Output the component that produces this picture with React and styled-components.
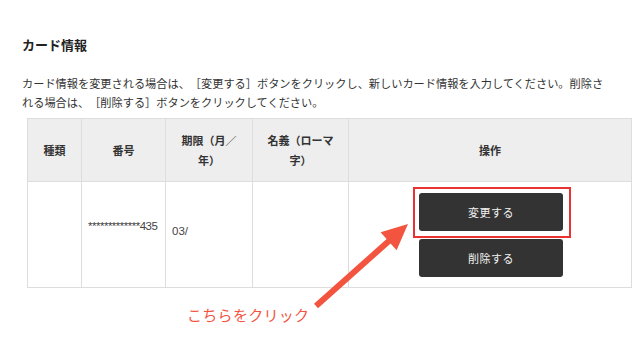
import styled, { createGlobalStyle } from 'styled-components';

const GlobalStyle = createGlobalStyle`
  html, body {
    margin: 0;
    padding: 0;
    background: #ffffff;
  }
  body {
    font-family: "Noto Sans CJK JP", "Noto Sans", sans-serif;
    color: #333333;
    text-spacing-trim: space-all;
  }
`

const Page = styled.div`
  position: relative;
  width: 640px;
  height: 360px;
  padding: 36px 0 0 22px;
  box-sizing: border-box;
  overflow: hidden;
`

const Title = styled.h2`
  margin: 0;
  font-size: 13px;
  line-height: 18px;
  font-weight: 700;
  color: #222222;
`

const Lead = styled.p`
  margin: 20px 0 6px;
  width: 590px;
  font-size: 11.2px;
  line-height: 19px;
  color: #333333;
`

const Table = styled.table`
  margin-left: 5px;
  width: 605px;
  border-collapse: collapse;
  table-layout: fixed;
  border: 1px solid #dddddd;
`

const Th = styled.th`
  box-sizing: border-box;
  width: ${({ w }) => (w ? `${w}px` : 'auto')};
  height: 63px;
  padding: 0 12px;
  background: #eeeeee;
  border: 1px solid #dddddd;
  font-size: 11px;
  line-height: 20px;
  font-weight: 700;
  color: #333333;
  text-align: center;
  vertical-align: middle;
`

const Td = styled.td`
  box-sizing: border-box;
  height: 106px;
  padding: 0 4px ${({ lift = 0 }) => lift}px 6px;
  border: 1px solid #dddddd;
  font-family: "Liberation Sans", "Noto Sans CJK JP", sans-serif;
  font-size: 11.5px;
  line-height: 16px;
  letter-spacing: ${({ tight }) => (tight ? '-0.5px' : '0')};
  white-space: nowrap;
  color: #444444;
  vertical-align: middle;
`

const Actions = styled.div`
  display: flex;
  flex-direction: column;
  align-items: center;
  gap: 8px;
`

const Button = styled.button`
  position: relative;
  width: 144px;
  height: 38px;
  border: none;
  border-radius: 3px;
  background: #333333;
  color: #f4f4f4;
  font-family: "Noto Sans CJK JP", sans-serif;
  font-size: 11px;
  letter-spacing: 0.5px;
  cursor: pointer;

  &::after {
    content: '';
    display: ${({ highlight }) => (highlight ? 'block' : 'none')};
    position: absolute;
    inset: -6px -8px -7px -6px;
    border: 2px solid #ea3232;
    pointer-events: none;
  }
`

const Caption = styled.p`
  margin: 17px 0 0 165px;
  font-size: 15px;
  line-height: 20px;
  letter-spacing: 0.3px;
  color: #f2543f;
`

const Arrow = styled.svg`
  position: absolute;
  left: 0;
  top: 0;
  pointer-events: none;
`

const App = () => {
  return (
    <>
      <GlobalStyle />
      <Page>
        <Title>カード情報</Title>
        <Lead>
          カード情報を変更される場合は、［変更する］ボタンをクリックし、新しいカード情報を入力してください。削除される場合は、［削除する］ボタンをクリックしてください。
        </Lead>
        <Table>
          <thead>
            <tr>
              <Th w={54}>種類</Th>
              <Th w={84}>番号</Th>
              <Th w={87}>期限（月／年）</Th>
              <Th w={96}>名義（ローマ字）</Th>
              <Th>操作</Th>
            </tr>
          </thead>
          <tbody>
            <tr>
              <Td></Td>
              <Td lift={18} tight>*************435</Td>
              <Td lift={8}>03/</Td>
              <Td></Td>
              <Td>
                <Actions>
                  <Button highlight>変更する</Button>
                  <Button>削除する</Button>
                </Actions>
              </Td>
            </tr>
          </tbody>
        </Table>
        <Caption>こちらをクリック</Caption>
        <Arrow width="640" height="360" viewBox="0 0 640 360">
          <line x1="316" y1="306" x2="390" y2="240" stroke="#f2543f" strokeWidth="6" />
          <polygon points="408,224 396.6,250.3 380.6,232.3" fill="#f2543f" />
        </Arrow>
      </Page>
    </>
  )
}

export default App
